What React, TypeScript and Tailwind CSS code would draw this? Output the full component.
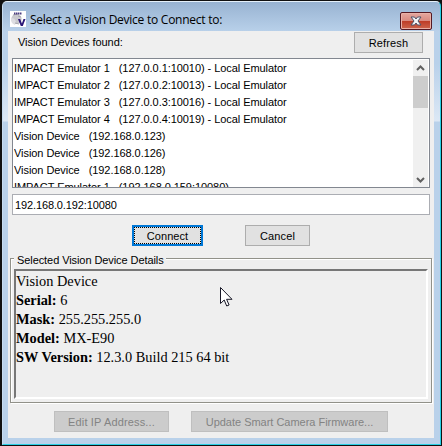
import type { ReactNode } from 'react';

const devices = [
  ['IMPACT Emulator 1', '(127.0.0.1:10010) - Local Emulator'],
  ['IMPACT Emulator 2', '(127.0.0.2:10013) - Local Emulator'],
  ['IMPACT Emulator 3', '(127.0.0.3:10016) - Local Emulator'],
  ['IMPACT Emulator 4', '(127.0.0.4:10019) - Local Emulator'],
  ['Vision Device', '(192.168.0.123)'],
  ['Vision Device', '(192.168.0.126)'],
  ['Vision Device', '(192.168.0.128)'],
  ['IMPACT Emulator 1', '(192.168.0.159:10080)'],
];

const details = [
  ['Serial:', '6'],
  ['Mask:', '255.255.255.0'],
  ['Model:', 'MX-E90'],
  ['SW Version:', '12.3.0 Build 215 64 bit'],
];

function Button({ className = '', disabled = false, children }: { className?: string; disabled?: boolean; children: ReactNode }) {
  const tone = disabled ? 'border-[#bfbfbf] bg-[#cccccc] text-[#838383]' : 'border-[#adadad] bg-[#e1e1e1] text-black';
  return (
    <button disabled={disabled} className={`flex h-[21px] shrink-0 items-center justify-center whitespace-nowrap border pt-px ${tone} ${className}`}>
      {children}
    </button>
  );
}

function Logo() {
  return (
    <svg width="16" height="16" viewBox="0 0 16 16" className="shrink-0">
      <rect width="16" height="16" fill="#fff" />
      <ellipse cx="6.5" cy="8" rx="5.2" ry="5" fill="#c9c9ce" />
      <path d="M1 8c2-2 4 0 5 3l-1 3C2 13 1 11 1 8z" fill="#dedee2" />
      <path d="M3 4l5-1M8 5l3 1M5 12l4 1" stroke="#a9a9ae" strokeWidth="1" />
      <path d="M4 2.5h8" stroke="#4b3d80" strokeWidth="2" strokeDasharray="1.5 .5" />
      <path d="M8 8h2.2l1.7 4.4L13.5 8h2l-2.7 7h-2z" fill="#2b1878" />
    </svg>
  );
}

export default function App() {
  return (
    <div className="relative flex h-[446px] w-[442px] flex-col overflow-hidden bg-[#111] font-['Liberation_Sans',Arial,sans-serif] text-[11px] leading-[17px] text-black">
      <div className="mb-px ml-[2px] mr-px mt-px flex h-[444px] flex-col rounded-t-[5px] border border-b-[#28d0e5] border-l-[#c7dcf0] border-r-[#28d0e5] border-t-[#e5f0fa] bg-[linear-gradient(to_bottom,#98b3d2_0px,#b9d1ea_30px,#b9d1ea_62px,#dce8f5_119px,#b9d1ea_120px)] pb-[6px] pl-[5px] pr-[6px]">
        <header className="flex h-[29px] shrink-0 items-center pl-[2px]">
          <div className="mt-[4px]"><Logo /></div>
          <h1 className="ml-[4px] mt-[5px] whitespace-nowrap font-['Open_Sans','Noto_Sans',sans-serif] text-[12px] tracking-[-0.25px]">Select a Vision Device to Connect to:</h1>
          <button aria-label="Close" className="ml-auto mr-[2px] mt-[8px] flex h-[18px] w-[32px] shrink-0 items-center justify-center rounded-[2px] border border-[#551923] bg-[linear-gradient(to_bottom,#e5a79f_0%,#d98b81_47%,#bd3b26_50%,#cd654d_100%)] shadow-[inset_0_0_0_1px_#e9b0a6]">
            <svg width="14" height="12" viewBox="0 0 14 12">
              <path d="M2 2h3.5L7 4l1.5-2H12L9 6l3 4H8.5L7 8l-1.5 2H2l3-4z" fill="#f4f4f6" stroke="#4c5268" />
            </svg>
          </button>
        </header>
        <main className="flex h-[407px] w-[426px] shrink-0 flex-col bg-[#efefef]">
          <div className="flex h-[27px] justify-between pl-[10px] pr-[11px] pt-px">
            <span className="pt-[2px] tracking-[-0.04px]">Vision Devices found:</span>
            <Button className="w-[69px]"><span className="tracking-[0.15px]">Refresh</span></Button>
          </div>
          <div className="mx-[4px] flex h-[130px] shrink-0 overflow-hidden border border-[#828790] bg-white p-px">
            <div className="h-[127px] flex-1 overflow-hidden">
              {devices.map(([name, address], i) => (
                <div key={i} className="h-[17px] whitespace-pre tracking-[-0.06px]">{`${name}   ${address}`}</div>
              ))}
            </div>
            <div className="flex h-[128px] w-[15px] flex-col items-center bg-[#f0f0f0]">
              <svg width="15" height="16" viewBox="0 0 15 16" className="shrink-0"><path d="M4 10l3.5-3.5L11 10" stroke="#606060" strokeWidth="2" fill="none" /></svg>
              <div className="h-[32px] w-full bg-[#cdcdcd]" />
              <svg width="15" height="16" viewBox="0 0 15 16" className="mt-auto shrink-0"><path d="M4 6l3.5 3.5L11 6" stroke="#606060" strokeWidth="2" fill="none" /></svg>
            </div>
          </div>
          <div className="mx-[4px] mt-[6px] flex h-[21px] shrink-0 items-center border border-[#abadb3] bg-white pl-[2px] pt-px tracking-[-0.12px]">192.168.0.192:10080</div>
          <div className="mt-[10px] flex pl-[124px]">
            <button className="flex h-[21px] w-[71px] items-center justify-center border border-[#0078d7] bg-[#0078d7] p-px">
              <span className="flex h-full w-full items-center justify-center border border-dotted border-black bg-[#e1e1e1] pt-px tracking-[0.05px]">Connect</span>
            </button>
            <Button className="ml-[42px] w-[65px]"><span className="tracking-[0.15px]">Cancel</span></Button>
          </div>
          <section className="relative ml-[2px] mt-[12px] h-[145px] w-[422px] shrink-0 border border-[#919189] px-[3px] pt-[10px] shadow-[1px_1px_0_#fff,inset_1px_1px_0_#fff]">
            <h2 className="absolute left-[3px] top-[-7px] bg-[#efefef] pl-[3px] pr-[2px] tracking-[-0.08px]">Selected Vision Device Details</h2>
            <div className="flex h-[130px] w-[414px] flex-col border-2 border-b-white border-l-[#777] border-r-white border-t-[#777] pt-px font-['Liberation_Serif',serif] text-[14.35px] leading-[19px]">
              <div>Vision Device</div>
              {details.map(([label, value]) => (
                <div key={label}><b>{label}</b> {value}</div>
              ))}
            </div>
          </section>
          <footer className="mt-[8px] flex pl-[46px]">
            <Button disabled className="w-[115px]"><span className="tracking-[0.15px]">Edit IP Address...</span></Button>
            <Button disabled className="ml-[22px] w-[197px]"><span className="tracking-[-0.02px]">Update Smart Camera Firmware...</span></Button>
          </footer>
        </main>
      </div>
      <svg width="13" height="20" viewBox="0 0 13 20" className="absolute left-[220px] top-[287px]">
        <path d="M.5.5v16l3.7-3.5 2.5 6 2.4-1-2.5-5.7H12z" fill="#fff" stroke="#171726" />
      </svg>
    </div>
  );
}
